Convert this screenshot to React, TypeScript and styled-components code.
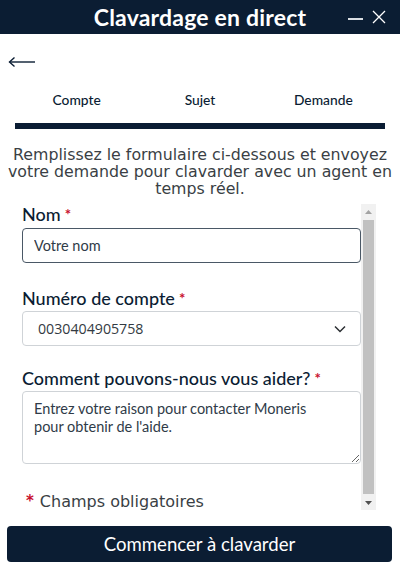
import styled, { createGlobalStyle } from "styled-components"

const navy = "#0b1d33"
const red = "#c8102e"
const ui = `"Lato", "Noto Sans", sans-serif`
const round = `"DejaVu Sans", "Noto Sans", sans-serif`

const GlobalStyle = createGlobalStyle`
    html, body {
        margin: 0;
        padding: 0;
        background: #ffffff;
    }
    * {
        box-sizing: border-box;
    }
`

const Window = styled.div`
    width: 400px;
    height: 585px;
    display: flex;
    flex-direction: column;
    background: #ffffff;
    font-family: ${ui};
    color: ${navy};
    overflow: hidden;
`

const Header = styled.header`
    height: 34px;
    flex: none;
    background: ${navy};
    display: flex;
    align-items: center;
    justify-content: center;
    position: relative;
`

const Title = styled.h1`
    margin: 0 0 1px;
    color: #ffffff;
    font-size: 23px;
    font-weight: 700;
    letter-spacing: 0.2px;
`

const WindowActions = styled.div`
    position: absolute;
    right: 14px;
    top: 0;
    height: 34px;
    display: flex;
    align-items: center;
    gap: 9px;
`

const IconButton = styled.button`
    border: 0;
    padding: 0;
    background: none;
    color: #ffffff;
    display: flex;
    align-items: center;
    justify-content: center;
    cursor: pointer;
`

const BackRow = styled.div`
    height: 52px;
    padding: 22px 0 0 8px;
`

const BackButton = styled.button`
    border: 0;
    padding: 0;
    background: none;
    color: ${navy};
    display: flex;
    cursor: pointer;
`

const Steps = styled.nav`
    display: grid;
    grid-template-columns: repeat(3, 1fr);
    margin: 0 15px;
    padding-top: 6px;
    height: 43px;
    border-bottom: 6px solid ${navy};
`

const Step = styled.span`
    text-align: center;
    font-size: 13.8px;
    font-weight: 500;
    line-height: 16px;
`

const Intro = styled.p`
    margin: 17px 6px 0;
    font-family: ${round};
    font-size: 15.8px;
    line-height: 17px;
    color: #3a3f45;
    text-align: center;
`

const ScrollArea = styled.div`
    margin: 7px 24px 0 22px;
    height: 306px;
    display: flex;
`

const FormPane = styled.div`
    flex: 1;
    min-width: 0;
    overflow: hidden;
`

const ScrollBar = styled.div`
    width: 15px;
    flex: none;
    display: flex;
    flex-direction: column;
    background: #f1f1f1;
`

const ScrollArrow = styled.div<{ $down?: boolean }>`
    height: 15px;
    flex: none;
    display: flex;
    align-items: center;
    justify-content: center;
    color: ${p => (p.$down ? "#505050" : "#a3a3a3")};
`

const ScrollThumb = styled.div`
    flex: 1;
    margin: 1px 2px;
    background: #c1c1c1;
`

const Form = styled.form`
    display: flex;
    flex-direction: column;
`

const Field = styled.div<{ $gap?: number }>`
    display: flex;
    flex-direction: column;
    margin-bottom: ${p => p.$gap ?? 0}px;
`

const Label = styled.label<{ $space: number }>`
    font-size: 18px;
    font-weight: 500;
    line-height: 20px;
    margin-bottom: ${p => p.$space}px;
    color: ${navy};
`

const Star = styled.span<{ $lead?: boolean }>`
    color: ${red};
    font-size: 15px;
    font-weight: 700;
    vertical-align: 1px;
    margin: ${p => (p.$lead ? "0 6px 0 0" : "0 0 0 4px")};
`

const TextInput = styled.input`
    height: 35px;
    width: 100%;
    border: 1px solid #4a5866;
    border-radius: 4px;
    padding: 0 11px;
    font-family: ${ui};
    font-size: 14.5px;
    color: ${navy};
    outline: none;

    &::placeholder {
        color: #2f3b48;
    }
`

const SelectBox = styled.div`
    height: 35px;
    border: 1px solid #cfd3d7;
    border-radius: 4px;
    display: flex;
    align-items: center;
    justify-content: space-between;
    padding: 0 14px 0 15px;
    font-family: "Open Sans", "Noto Sans", sans-serif;
    font-size: 14.2px;
    color: #333a42;
`

const TextArea = styled.textarea`
    height: 73px;
    width: 100%;
    border: 1px solid #cfd3d7;
    border-radius: 4px;
    padding: 8px 34px 8px 11px;
    font-family: ${ui};
    font-size: 14.5px;
    line-height: 18px;
    color: ${navy};
    resize: vertical;
    outline: none;

    &::placeholder {
        color: #2f3b48;
    }
`

const Required = styled.p`
    margin: 0 0 0 4px;
    font-family: ${round};
    font-size: 16px;
    line-height: 20px;
    color: #3a3f45;
`

const Footer = styled.div`
    padding: 16px 8px 0 7px;
`

const StartButton = styled.button`
    width: 100%;
    height: 36px;
    border: 0;
    border-radius: 4px;
    background: ${navy};
    color: #ffffff;
    font-family: ${ui};
    font-size: 18.6px;
    font-weight: 400;
    cursor: pointer;
`

function Triangle({ down }: { down?: boolean }) {
    return (
        <svg width="7" height="4" viewBox="0 0 7 4" fill="currentColor">
            <path d={down ? "M0 0 H7 L3.5 4 Z" : "M0 4 H7 L3.5 0 Z"} />
        </svg>
    )
}

export default function App() {
    return (
        <>
            <GlobalStyle />
            <Window>
                <Header>
                    <Title>Clavardage en direct</Title>
                    <WindowActions>
                        <IconButton aria-label="Réduire">
                            <svg width="15" height="14" viewBox="0 0 15 14">
                                <rect x="0" y="8" width="15" height="2" fill="#d9dde2" />
                            </svg>
                        </IconButton>
                        <IconButton aria-label="Fermer">
                            <svg width="14" height="14" viewBox="0 0 14 14" stroke="#ffffff" strokeWidth="1.3">
                                <path d="M1 1 L13 13 M13 1 L1 13" />
                            </svg>
                        </IconButton>
                    </WindowActions>
                </Header>

                <BackRow>
                    <BackButton aria-label="Retour">
                        <svg width="28" height="12" viewBox="0 0 28 12" fill="none" stroke={navy} strokeWidth="1.4">
                            <path d="M1.5 6 H27" />
                            <path d="M6.5 1.5 L1.5 6 L6.5 10.5" />
                        </svg>
                    </BackButton>
                </BackRow>

                <Steps>
                    <Step>Compte</Step>
                    <Step>Sujet</Step>
                    <Step>Demande</Step>
                </Steps>

                <Intro>
                    Remplissez le formulaire ci-dessous et envoyez votre demande pour clavarder avec un agent en
                    temps réel.
                </Intro>

                <ScrollArea>
                    <FormPane>
                        <Form>
                            <Field $gap={25}>
                                <Label $space={4}>
                                    Nom<Star>*</Star>
                                </Label>
                                <TextInput placeholder="Votre nom" />
                            </Field>
                            <Field $gap={22}>
                                <Label $space={3}>
                                    Numéro de compte<Star>*</Star>
                                </Label>
                                <SelectBox>
                                    <span>0030404905758</span>
                                    <svg width="12" height="8" viewBox="0 0 12 8" fill="none" stroke="#2b2f33" strokeWidth="1.5">
                                        <path d="M1 1.5 L6 6.5 L11 1.5" />
                                    </svg>
                                </SelectBox>
                            </Field>
                            <Field $gap={27}>
                                <Label $space={3}>
                                    Comment pouvons-nous vous aider?<Star>*</Star>
                                </Label>
                                <TextArea placeholder="Entrez votre raison pour contacter Moneris pour obtenir de l'aide." />
                            </Field>
                            <Required>
                                <Star $lead>*</Star>
                                Champs obligatoires
                            </Required>
                        </Form>
                    </FormPane>
                    <ScrollBar aria-hidden>
                        <ScrollArrow>
                            <Triangle />
                        </ScrollArrow>
                        <ScrollThumb />
                        <ScrollArrow $down>
                            <Triangle down />
                        </ScrollArrow>
                    </ScrollBar>
                </ScrollArea>

                <Footer>
                    <StartButton>Commencer à clavarder</StartButton>
                </Footer>
            </Window>
        </>
    )
}
